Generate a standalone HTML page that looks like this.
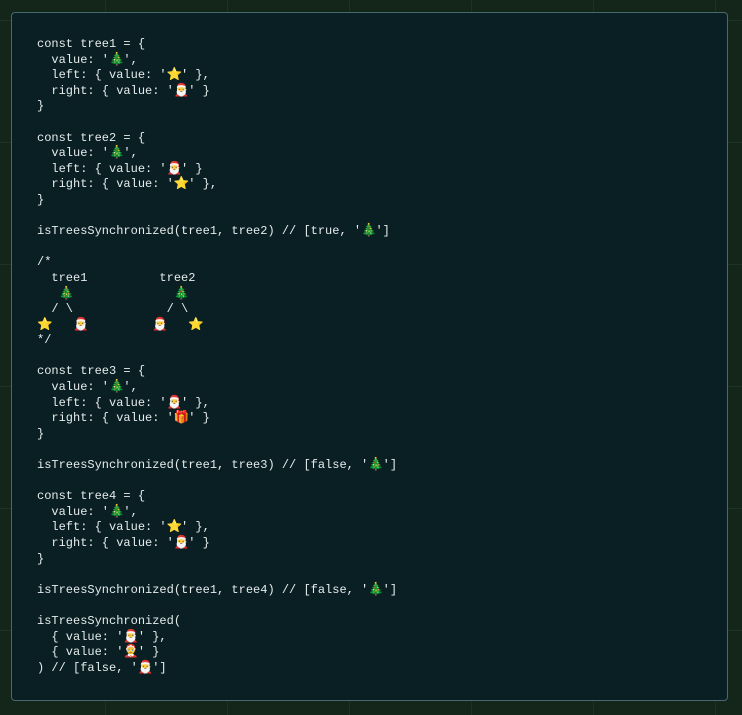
<!DOCTYPE html>
<html><head><meta charset="utf-8"><style>
html,body{margin:0;padding:0;}
body{width:742px;height:715px;overflow:hidden;background:#142619;
background-image:linear-gradient(rgba(60,90,60,.25) 1px,transparent 1px),linear-gradient(90deg,rgba(60,90,60,.25) 1px,transparent 1px);
background-size:122px 122px;background-position:105px 20px;position:relative;}
.panel{position:absolute;left:11px;top:12px;width:715px;height:687px;background:#0a1f24;border:1px solid #4a6870;border-radius:4px;}
pre{position:absolute;left:25px;top:24px;margin:0;font-family:"Liberation Mono",monospace;font-size:12px;line-height:15.6px;color:#e6ecec;}
.e{display:inline-block;width:14.4px;text-align:center;font-size:12.5px;line-height:12px;font-family:"Noto Color Emoji","DejaVu Sans",sans-serif;}
</style></head><body>
<div class="panel">
<pre>const tree1 = {
  value: '<span class="e">🎄</span>',
  left: { value: '<span class="e">⭐</span>' },
  right: { value: '<span class="e">🎅</span>' }
}

const tree2 = {
  value: '<span class="e">🎄</span>',
  left: { value: '<span class="e">🎅</span>' }
  right: { value: '<span class="e">⭐</span>' },
}

isTreesSynchronized(tree1, tree2) // [true, '<span class="e">🎄</span>']

/*
  tree1          tree2
   <span class="e">🎄</span>              <span class="e">🎄</span>
  / \             / \
<span class="e">⭐</span>   <span class="e">🎅</span>         <span class="e">🎅</span>   <span class="e">⭐</span>
*/

const tree3 = {
  value: '<span class="e">🎄</span>',
  left: { value: '<span class="e">🎅</span>' },
  right: { value: '<span class="e">🎁</span>' }
}

isTreesSynchronized(tree1, tree3) // [false, '<span class="e">🎄</span>']

const tree4 = {
  value: '<span class="e">🎄</span>',
  left: { value: '<span class="e">⭐</span>' },
  right: { value: '<span class="e">🎅</span>' }
}

isTreesSynchronized(tree1, tree4) // [false, '<span class="e">🎄</span>']

isTreesSynchronized(
  { value: '<span class="e">🎅</span>' },
  { value: '<span class="e">🤶</span>' }
) // [false, '<span class="e">🎅</span>']</pre>
</div>
</body></html>
